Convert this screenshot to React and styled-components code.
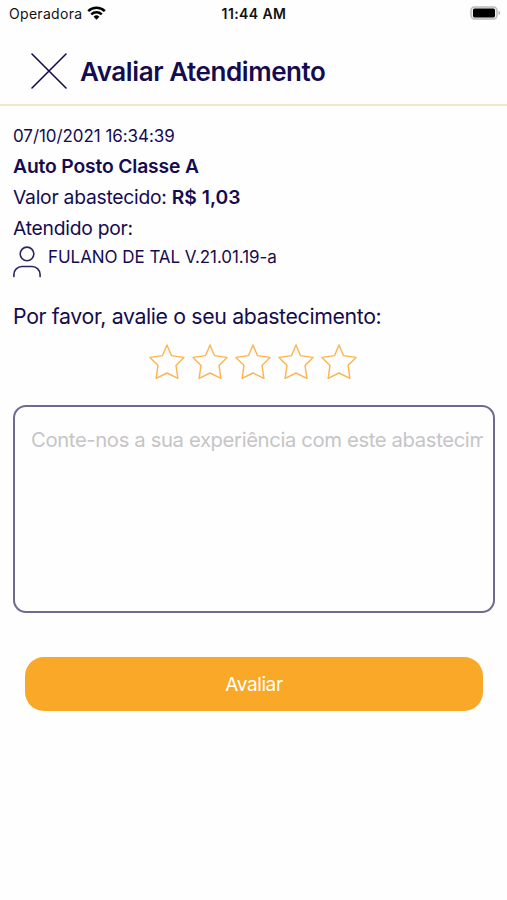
import React, { useState } from "react";
import styled, { createGlobalStyle } from "styled-components";

const stars = [1, 2, 3, 4, 5];

const App = () => {
  const [rating, setRating] = useState(0);

  return (
    <>
      <GlobalStyle />
      <Screen>
        <StatusBar>
          <Carrier>
            <Operator>Operadora</Operator>
            <WifiIcon />
          </Carrier>
          <Clock>11:44 AM</Clock>
          <BatteryIcon />
        </StatusBar>
        <Header>
          <CloseButton aria-label="Fechar">
            <svg width="36" height="36" viewBox="0 0 36 36">
              <path
                d="M1 1L35 35M35 1L1 35"
                stroke="#150c50"
                strokeWidth="1.6"
                strokeLinecap="round"
              />
            </svg>
          </CloseButton>
          <Title>Avaliar Atendimento</Title>
        </Header>
        <Content>
          <Line $height={30} $size={17} $spacing={-0.06}>
            07/10/2021 16:34:39
          </Line>
          <Line $height={30} $size={19.3} $weight={600} $spacing={-0.15}>
            Auto Posto Classe A
          </Line>
          <Line $height={32} $size={19.3} $spacing={-0.25}>
            Valor abastecido: <Price>R$ 1,03</Price>
          </Line>
          <Line $height={30} $size={19.3} $spacing={-0.25}>
            Atendido por:
          </Line>
          <Attendant>
            <UserIcon />
            <Line $height={28} $size={17} $spacing={-0.05}>
              FULANO DE TAL V.21.01.19-a
            </Line>
          </Attendant>
          <Line $height={32} $size={21.3} $spacing={-0.36}>
            Por favor, avalie o seu abastecimento:
          </Line>
          <Stars>
            {stars.map((star) => (
              <StarButton
                key={star}
                aria-label={`Nota ${star}`}
                onClick={() => setRating(star)}
              >
                <StarIcon filled={star <= rating} />
              </StarButton>
            ))}
          </Stars>
          <Comment>
            <Input placeholder="Conte-nos a sua experiência com este abastecimento" />
          </Comment>
          <SubmitButton>Avaliar</SubmitButton>
        </Content>
      </Screen>
    </>
  );
};

const WifiIcon = () => (
  <svg width="19" height="14" viewBox="0 0 19 14" fill="none" stroke="#000">
    <path d="M1.2 5.2a12 12 0 0 1 16.6 0" strokeWidth="2.5" />
    <path d="M4.2 8.4a7.6 7.6 0 0 1 10.6 0" strokeWidth="2.3" />
    <path d="M6.6 10.7a4.2 4.2 0 0 1 5.8 0L9.5 13.7z" fill="#000" stroke="none" />
  </svg>
);

const BatteryIcon = () => (
  <svg width="31" height="14" viewBox="0 0 31 14">
    <rect x="1" y="1" width="26" height="12" rx="3.4" fill="#eee" stroke="#bbb" strokeWidth="1.5" />
    <rect x="3" y="2.6" width="22" height="8.8" rx="1.6" fill="#000" />
    <path d="M28.6 4.8a2.4 2.4 0 0 1 0 4.4z" fill="#aaa" />
  </svg>
);

const UserIcon = () => (
  <svg width="28" height="32" viewBox="0 0 28 32" fill="none" stroke="#2c2560" strokeWidth="1.6">
    <circle cx="14" cy="7.9" r="6.8" />
    <path d="M0.9 30.6V28.5a8 8 0 0 1 8-8h10.2a8 8 0 0 1 8 8v2.1" strokeLinecap="round" />
  </svg>
);

const StarIcon = ({ filled }) => (
  <svg width="36" height="36" viewBox="0 0 36 36">
    <path
      d="M18 1L22.4 11.6L35 13.4L27 21.4L28.9 34.4L18 29L7.1 34.4L9 21.4L1 13.4L13.6 11.6Z"
      fill={filled ? "#faa827" : "none"}
      stroke="#fbb44f"
      strokeWidth="1.4"
      strokeLinejoin="round"
    />
  </svg>
);

const GlobalStyle = createGlobalStyle`
  * {
    box-sizing: border-box;
  }
  body {
    margin: 0;
    background-color: #fefefe;
    font-family: "Inter", "Liberation Sans", sans-serif;
  }
`;

const Screen = styled.div`
  height: 900px;
  overflow: hidden;
  color: #150c50;
`;

const StatusBar = styled.div`
  display: grid;
  grid-template-columns: 1fr auto 1fr;
  align-items: center;
  height: 27px;
  padding: 0 6px 0 9px;
  color: #111;
  font-size: 14px;
  line-height: 27px;

  & > svg {
    margin-top: -1px;
    justify-self: end;
  }
`;

const Carrier = styled.div`
  display: flex;
  align-items: center;
  gap: 5px;

  & > svg {
    margin-top: -2px;
  }
`;

const Operator = styled.span`
  letter-spacing: 0.3px;
`;

const Clock = styled.div`
  margin-left: -2px;
  font-weight: 600;
  letter-spacing: 0.4px;
`;

const Header = styled.header`
  display: flex;
  align-items: center;
  height: 79px;
  padding: 10px 31px 0;
  border-bottom: 2px solid #f2e5c8;
`;

const CloseButton = styled.button`
  display: flex;
  padding: 0;
  border: none;
  background: none;
  cursor: pointer;
`;

const Title = styled.h1`
  margin: 1px 0 0 13px;
  font-size: 26px;
  font-weight: 600;
  line-height: 37px;
  letter-spacing: -0.42px;
`;

const Content = styled.main`
  display: flex;
  flex-direction: column;
  padding: 15px 12px 0 13px;
`;

const Line = styled.div`
  font-size: ${(props) => props.$size}px;
  font-weight: ${(props) => props.$weight || 400};
  line-height: ${(props) => props.$height}px;
  letter-spacing: ${(props) => props.$spacing}px;
  white-space: nowrap;
`;

const Price = styled.b`
  font-weight: 600;
  letter-spacing: 0;
`;

const Attendant = styled.div`
  display: flex;
  gap: 7px;
  height: 57px;

  & > svg {
    margin-top: 3px;
  }
`;

const Stars = styled.div`
  display: flex;
  justify-content: center;
  gap: 6.8px;
  margin: 12px 2px 0 0;
`;

const StarButton = styled.button`
  display: flex;
  padding: 0;
  border: none;
  background: none;
  cursor: pointer;
`;

const Comment = styled.div`
  height: 208px;
  margin-top: 25px;
  padding: 16px 10px 0 16px;
  border: 2px solid #6f6a90;
  border-radius: 13px;
`;

const Input = styled.input`
  display: block;
  width: 100%;
  height: 32px;
  padding: 0;
  border: none;
  outline: none;
  background: none;
  color: #150c50;
  font-family: inherit;
  font-size: 20.3px;
  letter-spacing: -0.38px;

  &::placeholder {
    color: #c5c5c7;
  }
`;

const SubmitButton = styled.button`
  height: 54px;
  margin: 44px 12px 0;
  border: none;
  border-radius: 19px;
  background-color: #faa827;
  color: #fff;
  font-family: inherit;
  font-size: 19px;
  letter-spacing: -0.4px;
  cursor: pointer;
`;

export default App;
